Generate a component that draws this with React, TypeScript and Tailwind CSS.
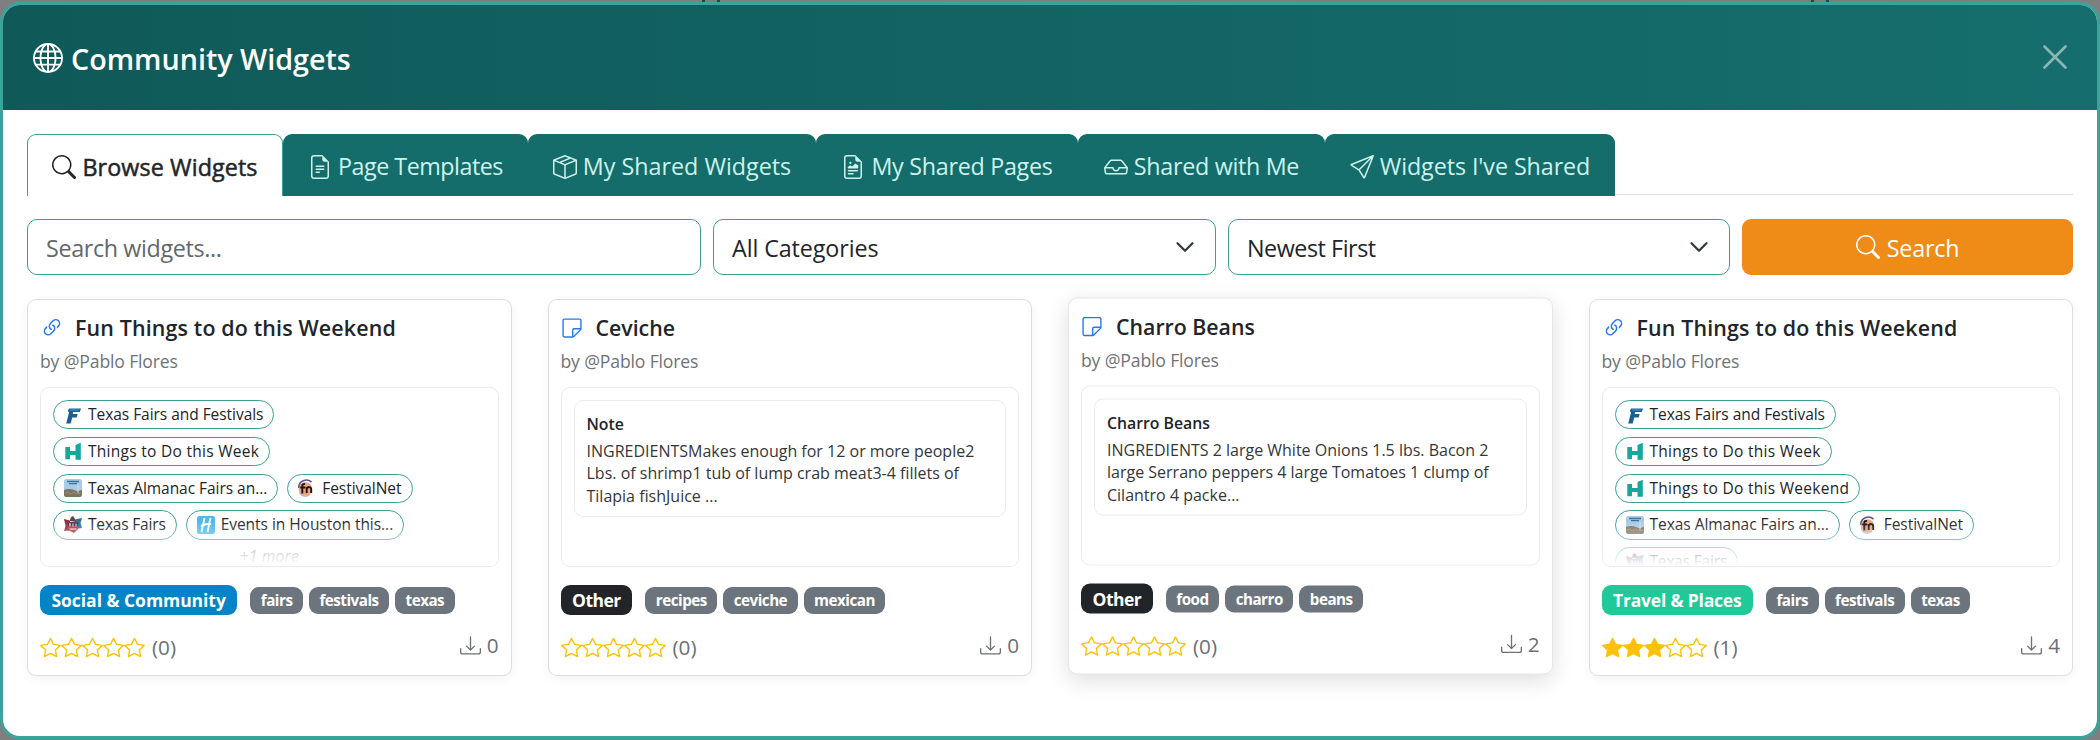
import React, { useState } from 'react';
import {
  BsBoxSeam,
  BsDownload,
  BsFileEarmarkRichtext,
  BsFileEarmarkText,
  BsGlobe,
  BsInbox,
  BsLink45Deg,
  BsSearch,
  BsSend,
  BsStar,
  BsStarFill,
  BsSticky,
} from 'react-icons/bs';
import type { IconType } from 'react-icons';

type Favicon = 'fairs' | 'visit' | 'almanac' | 'festivalnet' | 'texas' | 'houston';

interface LinkItem {
  icon: Favicon;
  label: string;
}

interface Widget {
  id: number;
  title: string;
  author: string;
  links?: LinkItem[];
  more?: number;
  note?: { title: string; lines: string[] };
  category: string;
  categoryClass: string;
  tags: string[];
  rating: number;
  votes: number;
  downloads: number;
  hovered?: boolean;
}

const TABS: { label: string; Icon: IconType; className: string }[] = [
  { label: 'Browse Widgets', Icon: BsSearch, className: 'w-[256px] tracking-[0.100px]' },
  { label: 'Page Templates', Icon: BsFileEarmarkText, className: 'w-[245px] tracking-[-0.500px]' },
  { label: 'My Shared Widgets', Icon: BsBoxSeam, className: 'w-[288px]' },
  { label: 'My Shared Pages', Icon: BsFileEarmarkRichtext, className: 'w-[262px] tracking-[-0.280px]' },
  { label: 'Shared with Me', Icon: BsInbox, className: 'w-[247px] tracking-[-0.300px]' },
  { label: "Widgets I've Shared", Icon: BsSend, className: 'w-[290px] tracking-[-0.080px]' },
];

const WIDGETS: Widget[] = [
  {
    id: 1,
    title: 'Fun Things to do this Weekend',
    author: '@Pablo Flores',
    links: [
      { icon: 'fairs', label: 'Texas Fairs and Festivals' },
      { icon: 'visit', label: 'Things to Do this Week' },
      { icon: 'almanac', label: 'Texas Almanac Fairs an...' },
      { icon: 'festivalnet', label: 'FestivalNet' },
      { icon: 'texas', label: 'Texas Fairs' },
      { icon: 'houston', label: 'Events in Houston this...' },
    ],
    more: 1,
    category: 'Social & Community',
    categoryClass: 'bg-[#0284c7] tracking-[-0.050px]',
    tags: ['fairs', 'festivals', 'texas'],
    rating: 0,
    votes: 0,
    downloads: 0,
  },
  {
    id: 2,
    title: 'Ceviche',
    author: '@Pablo Flores',
    note: {
      title: 'Note',
      lines: [
        'INGREDIENTSMakes enough for 12 or more people2',
        'Lbs. of shrimp1 tub of lump crab meat3-4 fillets of',
        'Tilapia fishJuice ...',
      ],
    },
    category: 'Other',
    categoryClass: 'bg-[#212529] tracking-[-0.500px]',
    tags: ['recipes', 'ceviche', 'mexican'],
    rating: 0,
    votes: 0,
    downloads: 0,
  },
  {
    id: 3,
    title: 'Charro Beans',
    author: '@Pablo Flores',
    note: {
      title: 'Charro Beans',
      lines: [
        'INGREDIENTS 2 large White Onions 1.5 lbs. Bacon 2',
        'large Serrano peppers 4 large Tomatoes 1 clump of',
        'Cilantro 4 packe...',
      ],
    },
    category: 'Other',
    categoryClass: 'bg-[#212529] tracking-[-0.500px]',
    tags: ['food', 'charro', 'beans'],
    rating: 0,
    votes: 0,
    downloads: 2,
    hovered: true,
  },
  {
    id: 4,
    title: 'Fun Things to do this Weekend',
    author: '@Pablo Flores',
    links: [
      { icon: 'fairs', label: 'Texas Fairs and Festivals' },
      { icon: 'visit', label: 'Things to Do this Week' },
      { icon: 'visit', label: 'Things to Do this Weekend' },
      { icon: 'almanac', label: 'Texas Almanac Fairs an...' },
      { icon: 'festivalnet', label: 'FestivalNet' },
      { icon: 'texas', label: 'Texas Fairs' },
    ],
    category: 'Travel & Places',
    categoryClass: 'bg-[#20c997] tracking-[-0.200px]',
    tags: ['fairs', 'festivals', 'texas'],
    rating: 3,
    votes: 1,
    downloads: 4,
  },
];

const FaviconImage: React.FC<{ name: Favicon }> = ({ name }) => (
  <svg viewBox="0 0 18 18" className="size-[18px] shrink-0">
    {name === 'fairs' && (
      <g>
        <path d="M5 2.500h12l-1.200 3.600H9.300l-.6 1.900h5L12.600 11.400H8.200L6.700 17.500H2.200L5 6.500 3.800 5z" fill="#1b5f93" />
        <path d="M6 3.500h9l-.4 1H6.300z" fill="#3d9fd0" />
      </g>
    )}
    {name === 'visit' && (
      <path d="M1.300 5h4.700v4h5.500V3L16.800 .8V17.700H11.500v-4.700H6v4.200H1.300z" fill="#15a79b" />
    )}
    {name === 'almanac' && (
      <g>
        <rect width="18" height="18" rx="2.500" fill="#a9cbe4" />
        <path d="M3 2.500h12M5 4.700h8" stroke="#40739a" strokeWidth="1.300" />
        <path d="M0 11q5-2 10 0t8-.5v5q0 2.500-2.500 2.500h-13Q0 18 0 15.500z" fill="#7d7463" />
        <path d="M1 14l3-1 2 2 4-2 3 2 4-1" stroke="#a58d69" fill="none" />
        <path d="M14 6v8" stroke="#e9eef2" strokeWidth=".8" />
      </g>
    )}
    {name === 'festivalnet' && (
      <g>
        <circle cx="7.500" cy="10" r="6.800" fill="#eaa47f" />
        <path d="M.8 9A7.500 7.500 0 0 1 13.500 3.200" stroke="#64538e" strokeWidth="1.600" fill="none" />
        <path d="M1.500 13.500A7 7 0 0 0 12 15.500" stroke="#c9b3c6" strokeWidth="1.600" fill="none" />
        <path
          d="M4.300 14.500V7.200q0-2.600 2.700-2.200M2.300 8.500h5M8.700 14V8M8.700 9.800q1-2 2.800-1.700 1.700.2 1.700 2.300V14"
          stroke="#1c1413"
          strokeWidth="1.900"
          fill="none"
        />
      </g>
    )}
    {name === 'texas' && (
      <g>
        <path d="M0 3l6 1.500v10L0 15l1.500-5z" fill="#8f2f3c" />
        <path d="M11 3.500L18 2l-1.500 5L18 12l-7 1z" fill="#2f6f9c" />
        <path d="M4 6h10v7l-4 4-6-3z" fill="#b0343f" />
        <path d="M6 5q0-4 3-5l2 3 1 3z" fill="#554a48" />
        <path d="M4 6.500h10v3.500H4z" fill="#26334f" />
        <path d="M5 8h2M6 8v2.500M9 7.500v3M12 7.500v3M5.500 13h7" stroke="#f3f3f3" strokeWidth="1" />
      </g>
    )}
    {name === 'houston' && (
      <g>
        <rect width="18" height="18" rx="2.500" fill="#4bb8f0" />
        <path d="M7.500 2L4.500 16M13.500 2l-3 14M4 10.500q5-3.500 10-2.500" stroke="#fff" strokeWidth="1.900" fill="none" />
      </g>
    )}
  </svg>
);

const LinkPreview: React.FC<{ links: LinkItem[]; more?: number }> = ({ links, more }) => (
  <div className="flex flex-wrap gap-x-[9px] gap-y-[7.500px]">
    {links.map((link) => (
      <span
        key={link.label}
        className={`
          flex h-[29.250px] items-center gap-1.5 rounded-full border border-[#3f9f97] bg-white px-2.5 text-[15.500px] whitespace-nowrap text-[#212529]
          ${link.icon === 'visit' ? 'tracking-[0.280px]' : link.icon === 'texas' ? 'tracking-[-0.180px]' : 'tracking-[-0.040px]'}
        `}
      >
        <FaviconImage name={link.icon} />
        {link.label}
      </span>
    ))}
    {more && (
      <div className="-mt-px w-full text-center text-[15.600px] leading-[20px] tracking-[0.200px] text-[#6c757d] italic">
        +{more} more
      </div>
    )}
  </div>
);

const NotePreview: React.FC<{ title: string; lines: string[] }> = ({ title, lines }) => (
  <div className="h-[117px] rounded-[9px] border border-[#e9ebed] px-3 pt-3">
    <div className="text-[15.800px] leading-[22.500px] font-semibold">{title}</div>
    <div className="mt-1 text-[16px] leading-[22.500px] whitespace-nowrap text-[#33373b]">
      {lines.map((line) => (
        <div key={line}>{line}</div>
      ))}
    </div>
  </div>
);

const WidgetCard: React.FC<{ widget: Widget }> = ({ widget }) => {
  const TypeIcon = widget.links ? BsLink45Deg : BsSticky;

  return (
    <div
      className={`
        h-[377px] w-[484.500px] rounded-[9px] border bg-white px-3 pt-2.5
        ${widget.hovered
          ? '-translate-y-[1.500px] border-[#e4e6e8] shadow-[0_6px_22px_rgba(0,0,0,0.13)]'
          : 'border-[#dcdfe3] shadow-[0_3px_10px_rgba(0,0,0,0.05)]'
        }
      `}
    >
      <div className="flex h-9 items-center">
        <TypeIcon size={widget.links ? 24 : 22} className="-mt-px text-[#2478f2]" />
        <h6 className={widget.links ? 'ml-[11px] text-[21.400px] font-semibold tracking-[0.150px]' : 'ml-[13px] text-[21.300px] font-semibold'}>
          {widget.title}
        </h6>
      </div>
      <div className="h-[41px] pt-[2px] text-[17.600px] leading-[26px] tracking-[-0.150px] text-[#6f7377]">by {widget.author}</div>

      {/* Preview */}
      <div className="relative h-[180px] overflow-hidden rounded-[9px] border border-[#e9ebed] p-3">
        {widget.links && <LinkPreview links={widget.links} more={widget.more} />}
        {widget.note && <NotePreview {...widget.note} />}
        <div className="absolute inset-x-0 bottom-0 h-[45px] bg-gradient-to-b from-transparent to-white" />
      </div>

      {/* Category and tags */}
      <div className="mt-[17.500px] flex h-[31px] items-center gap-1.5 font-bold text-white">
        <span className={`mr-[7px] flex h-[30px] items-center rounded-[9px] px-[11.500px] text-[17.500px] ${widget.categoryClass}`}>
          {widget.category}
        </span>
        {widget.tags.map((tag) => (
          <span key={tag} className="flex h-[27px] items-center rounded-[9px] bg-[#6c757d] px-[10.500px] text-[15.200px] tracking-[-0.500px]">
            {tag}
          </span>
        ))}
      </div>

      {/* Rating */}
      <div className="mt-[14px] flex h-9 items-center justify-between text-[20.700px] text-[#6c7075]">
        <div className="flex items-center">
          <span className="flex text-[#ffc107]">
            {[1, 2, 3, 4, 5].map((n) => (n <= widget.rating ? <BsStarFill key={n} size={21} /> : <BsStar key={n} size={21} />))}
          </span>
          <span className="ml-[7px]">({widget.votes})</span>
        </div>
        <div className="-mt-1 flex items-center gap-1.5">
          <BsDownload size={21} />
          {widget.downloads}
        </div>
      </div>
    </div>
  );
};

const SelectBox: React.FC<{ value: string; className: string }> = ({ value, className }) => (
  <div className={`flex h-14 items-center justify-between rounded-[10px] border border-[#3f9f97] pr-[18px] pl-[18px] ${className}`}>
    <span className="pt-[2px]">{value}</span>
    <svg viewBox="0 0 16 16" className="size-6" fill="none" stroke="#343a40" strokeWidth="1.500" strokeLinecap="round" strokeLinejoin="round">
      <path d="m3 5.500 5 5L13 5.500" />
    </svg>
  </div>
);

export default function App() {
  const [activeTab, setActiveTab] = useState('Browse Widgets');
  const [query, setQuery] = useState('');

  return (
    <div className="h-[740px] w-[2100px] overflow-hidden bg-[#7f7f7f] font-['Open_Sans','Noto_Sans',sans-serif] text-[23.300px] text-[#212529]">
      {/* Sliver of the page behind the modal */}
      <div className="flex h-[2px] pl-[702px]">
        <span className="mr-3 w-[3px] bg-[#1d4a4a]" />
        <span className="mr-[1091px] w-[3px] bg-[#1d4a4a]" />
        <span className="mr-3 w-[3px] bg-[#1d4a4a]" />
        <span className="w-[3px] bg-[#1d4a4a]" />
      </div>

      <div className="h-[737px] overflow-hidden rounded-[20px] border-[3px] border-[#3ba39b] bg-white">
        <div className="flex h-[105px] items-center justify-between bg-gradient-to-r from-[#0f5a59] to-[#156e6d] pr-[30px] pl-[30px] text-white">
          <h5 className="flex items-center gap-[8px] pt-[2px] text-[28.700px] font-semibold">
            <BsGlobe size={30} />
            Community Widgets
          </h5>
          <svg viewBox="0 0 24 24" className="-mt-px size-6 opacity-50" fill="none" stroke="white" strokeWidth="2.600" strokeLinecap="round">
            <path d="M1.500 1.500l21 21M22.500 1.500l-21 21" />
          </svg>
        </div>

        <div className="px-6 pt-6">
          {/* Tabs */}
          <div className="flex h-[61px] border-b border-[#dee2e6]">
            {TABS.map(({ label, Icon, className }) => (
              <button
                key={label}
                onClick={() => setActiveTab(label)}
                className={`flex h-[62px] shrink-0 items-center justify-center gap-[6px] rounded-t-[9px] pt-[3px] whitespace-nowrap ${className} ${
                  activeTab === label
                    ? 'border border-b-0 border-[#3f9f97] bg-white text-[#212529] [-webkit-text-stroke:0.500px_#212529]'
                    : 'bg-[#146c6b] text-[#cdf3ec]'
                }`}
              >
                <Icon size={24} />
                {label}
              </button>
            ))}
          </div>

          {/* Filters */}
          <div className="mt-6 flex">
            <input
              className="h-14 w-[674px] rounded-[10px] border border-[#3f9f97] px-[18px] pt-[2px] tracking-[-0.350px] placeholder:text-[#62676c] focus:outline-none"
              placeholder="Search widgets..."
              value={query}
              onChange={(e) => setQuery(e.target.value)}
            />
            <SelectBox value="All Categories" className="ml-3 w-[503px] tracking-[-0.100px]" />
            <SelectBox value="Newest First" className="ml-3 w-[502px] tracking-[-0.450px]" />
            <button className="ml-3 flex h-14 flex-1 items-center justify-center gap-[7px] rounded-[9px] bg-[#ee8c17] text-white">
              <BsSearch size={24} />
              <span className="pt-[2px] tracking-[-0.200px]">Search</span>
            </button>
          </div>

          {/* Results */}
          <div className="mt-6 flex justify-between">
            {WIDGETS.map((widget) => (
              <WidgetCard key={widget.id} widget={widget} />
            ))}
          </div>
        </div>
      </div>
    </div>
  );
}
